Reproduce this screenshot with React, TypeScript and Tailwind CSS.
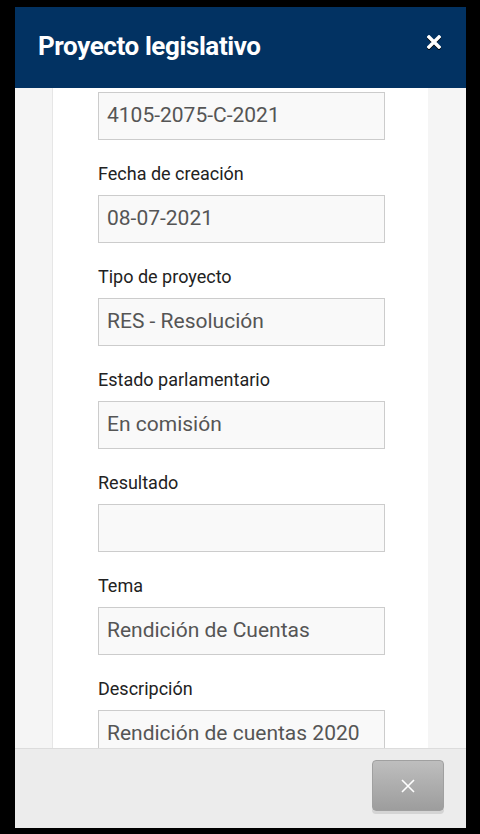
const fields = [
  { label: 'Número', value: '4105-2075-C-2021' },
  { label: 'Fecha de creación', value: '08-07-2021' },
  { label: 'Tipo de proyecto', value: 'RES - Resolución' },
  { label: 'Estado parlamentario', value: 'En comisión' },
  { label: 'Resultado', value: '' },
  { label: 'Tema', value: 'Rendición de Cuentas' },
  { label: 'Descripción', value: 'Rendición de cuentas 2020' },
];

export default function App() {
  return (
    <div className="w-[480px] h-[834px] bg-black pt-[7px] pl-[15px] font-['Roboto',sans-serif]">
      <div className="w-[451px] h-[821px] flex flex-col bg-[#f5f5f5]">
        <div className="h-[81px] shrink-0 bg-[#023262] flex items-center justify-between pl-[23px] pr-[25px]">
          <h1 className="text-white font-bold text-[26px] tracking-[-0.4px] pb-[2px]">Proyecto legislativo</h1>
          <svg width="14" height="14" viewBox="0 0 14 14" className="mb-[12px] drop-shadow-[0_1px_0_#000]">
            <path d="M2 2L12 12M12 2L2 12" stroke="white" strokeWidth="3.4" strokeLinecap="square" />
          </svg>
        </div>

        <div className="flex-1 overflow-hidden pl-[37px] pr-[38px]">
          <div className="h-full bg-white border-l border-[#e6e6e6] pl-[45px] pr-[43px] overflow-hidden">
            <div className="-mt-[29px]">
              {fields.map((f) => (
                <div key={f.label} className="mb-[22px]">
                  <label className="block h-[24px] mb-[9px] text-[18px] leading-[24px] text-[#222]">{f.label}</label>
                  <div className="h-[48px] border border-[#cccccc] bg-[#f9f9f9] px-[8px] flex items-center text-[21px] text-[#555]">
                    {f.value}
                  </div>
                </div>
              ))}
            </div>
          </div>
        </div>

        <div className="h-[80px] shrink-0 bg-[#ececec] border-t border-[#dcdcdc] flex justify-end pt-[11px] pr-[22px]">
          <button className="w-[72px] h-[51px] rounded-[4px] border border-[#a0a0a0] bg-gradient-to-b from-[#bebebe] to-[#9d9d9d] shadow-[0_3px_0_#d4d4d4] flex items-center justify-center">
            <svg width="14" height="14" viewBox="0 0 14 14">
              <path d="M1 1L13 13M13 1L1 13" stroke="white" strokeWidth="1.6" />
            </svg>
          </button>
        </div>
      </div>
    </div>
  );
}
